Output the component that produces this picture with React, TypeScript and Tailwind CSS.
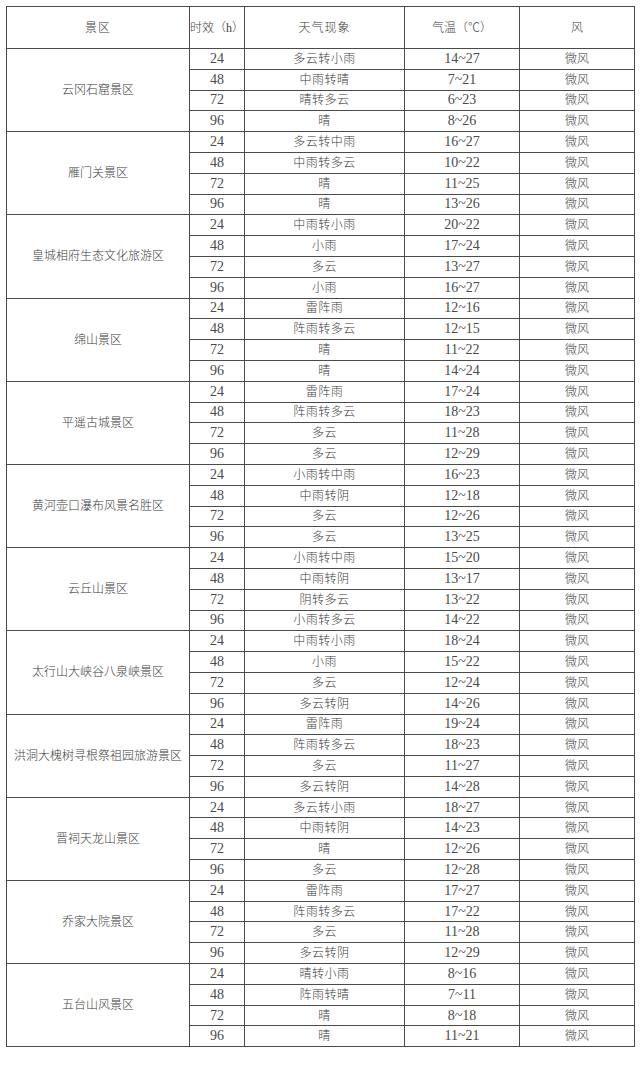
import React from 'react';

type Row = [string, string, string];

const areas: { name: string; rows: Row[] }[] = [
    { name: '云冈石窟景区', rows: [['多云转小雨', '14~27', '微风'], ['中雨转晴', '7~21', '微风'], ['晴转多云', '6~23', '微风'], ['晴', '8~26', '微风']] },
    { name: '雁门关景区', rows: [['多云转中雨', '16~27', '微风'], ['中雨转多云', '10~22', '微风'], ['晴', '11~25', '微风'], ['晴', '13~26', '微风']] },
    { name: '皇城相府生态文化旅游区', rows: [['中雨转小雨', '20~22', '微风'], ['小雨', '17~24', '微风'], ['多云', '13~27', '微风'], ['小雨', '16~27', '微风']] },
    { name: '绵山景区', rows: [['雷阵雨', '12~16', '微风'], ['阵雨转多云', '12~15', '微风'], ['晴', '11~22', '微风'], ['晴', '14~24', '微风']] },
    { name: '平遥古城景区', rows: [['雷阵雨', '17~24', '微风'], ['阵雨转多云', '18~23', '微风'], ['多云', '11~28', '微风'], ['多云', '12~29', '微风']] },
    { name: '黄河壶口瀑布风景名胜区', rows: [['小雨转中雨', '16~23', '微风'], ['中雨转阴', '12~18', '微风'], ['多云', '12~26', '微风'], ['多云', '13~25', '微风']] },
    { name: '云丘山景区', rows: [['小雨转中雨', '15~20', '微风'], ['中雨转阴', '13~17', '微风'], ['阴转多云', '13~22', '微风'], ['小雨转多云', '14~22', '微风']] },
    { name: '太行山大峡谷八泉峡景区', rows: [['中雨转小雨', '18~24', '微风'], ['小雨', '15~22', '微风'], ['多云', '12~24', '微风'], ['多云转阴', '14~26', '微风']] },
    { name: '洪洞大槐树寻根祭祖园旅游景区', rows: [['雷阵雨', '19~24', '微风'], ['阵雨转多云', '18~23', '微风'], ['多云', '11~27', '微风'], ['多云转阴', '14~28', '微风']] },
    { name: '晋祠天龙山景区', rows: [['多云转小雨', '18~27', '微风'], ['中雨转阴', '14~23', '微风'], ['晴', '12~26', '微风'], ['多云', '12~28', '微风']] },
    { name: '乔家大院景区', rows: [['雷阵雨', '17~27', '微风'], ['阵雨转多云', '17~22', '微风'], ['多云', '11~28', '微风'], ['多云转阴', '12~29', '微风']] },
    { name: '五台山风景区', rows: [['晴转小雨', '8~16', '微风'], ['阵雨转晴', '7~11', '微风'], ['晴', '8~18', '微风'], ['晴', '11~21', '微风']] },
];

const hours = ['24', '48', '72', '96'];

const cell = 'border border-[#4a4a4a] p-0 text-center align-middle';
const zh = 'text-[12px] font-light text-[#3d3d3d]';
const num = 'text-[14px] text-[#4a4a4a]';

export default function App() {
    return (
        <div className="min-h-screen bg-white pt-[6px] pl-[6px]" style={{ fontFamily: '"Liberation Serif", "Noto Sans CJK SC", serif' }}>
            <table className="border-collapse table-fixed w-[628px]">
                <colgroup>
                    <col className="w-[183px]" />
                    <col className="w-[55px]" />
                    <col className="w-[160px]" />
                    <col className="w-[115px]" />
                    <col className="w-[115px]" />
                </colgroup>
                <thead>
                    <tr className="h-[42px]">
                        <th className={`${cell} ${zh} font-light tracking-[1px]`}>景区</th>
                        <th className={`${cell} ${zh} font-light whitespace-nowrap`}>时效（h）</th>
                        <th className={`${cell} ${zh} font-light tracking-[1px]`}>天气现象</th>
                        <th className={`${cell} ${zh} font-light`}>气温（℃）</th>
                        <th className={`${cell} ${zh} font-light`}>风</th>
                    </tr>
                </thead>
                <tbody>
                    {areas.map((area) =>
                        area.rows.map((r, i) => (
                            <tr key={area.name + i} className="h-[20.8px]">
                                {i === 0 && (
                                    <td rowSpan={4} className={`${cell} ${zh} whitespace-nowrap`}>{area.name}</td>
                                )}
                                <td className={`${cell} ${num} leading-none`}>{hours[i]}</td>
                                <td className={`${cell} ${zh} leading-none tracking-[0.5px]`}>{r[0]}</td>
                                <td className={`${cell} ${num} leading-none`}>{r[1]}</td>
                                <td className={`${cell} ${zh} leading-none`}>{r[2]}</td>
                            </tr>
                        ))
                    )}
                </tbody>
            </table>
        </div>
    );
}
